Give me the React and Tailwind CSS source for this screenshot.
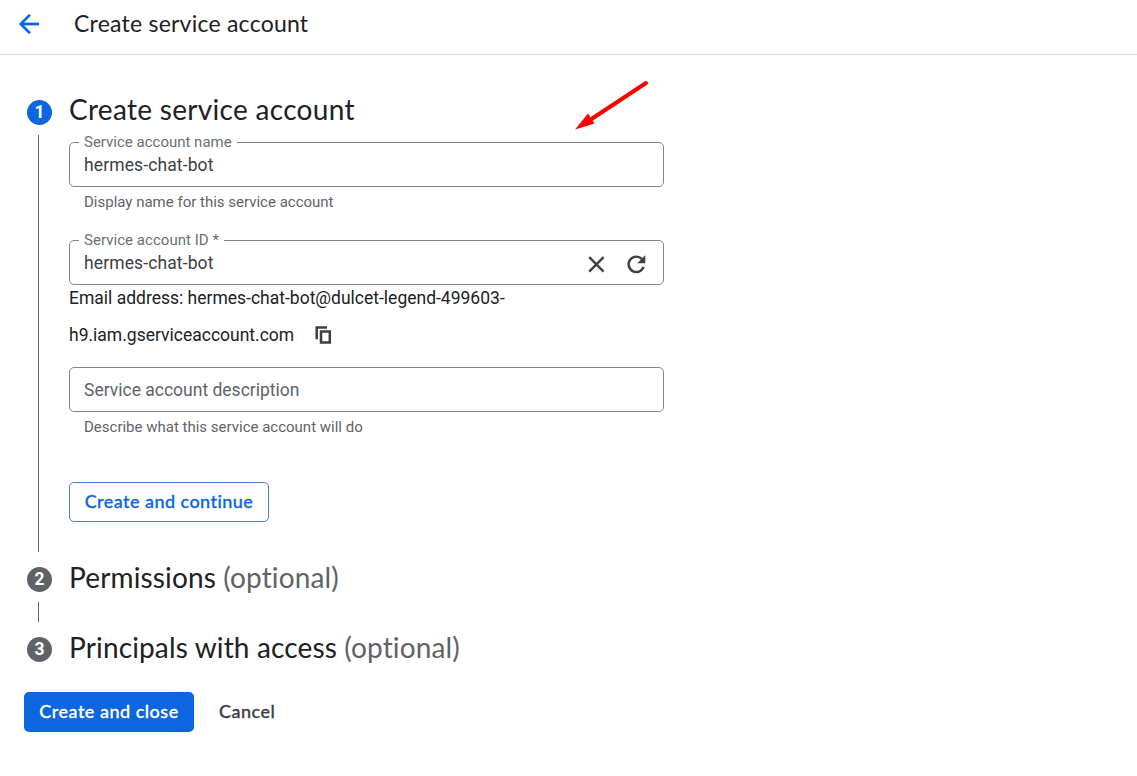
import React, { useState } from 'react';
import clsx from 'clsx';

const STEPS = [
  { id: 1, title: 'Create service account' },
  { id: 2, title: 'Permissions', optional: true },
  { id: 3, title: 'Principals with access', optional: true },
];

function ArrowBackIcon() {
  return (
    <svg width="30" height="30" viewBox="0 0 24 24" fill="#0b66e0" stroke="#0b66e0" strokeWidth="0.2">
      <path d="M20 11H7.83l5.59-5.59L12 4l-8 8 8 8 1.41-1.41L7.83 13H20v-2z" />
    </svg>
  );
}

function ClearIcon() {
  return (
    <svg width="22" height="22" viewBox="0 0 22 22" fill="none" stroke="#3c4043" strokeWidth="2.4">
      <path d="M4.2 4.2l14.4 14.4M18.6 4.2L4.2 18.6" />
    </svg>
  );
}

function RefreshIcon() {
  return (
    <svg width="22" height="22" viewBox="0 0 18 18" fill="none">
      <path d="M15.2 11.4A6.3 6.3 0 1 1 13.9 5" stroke="#3c4043" strokeWidth="2" />
      <path d="M16.6 1.9v6.4H10z" fill="#3c4043" />
    </svg>
  );
}

function CopyIcon() {
  return (
    <svg width="17" height="18" viewBox="0 0 17 18" fill="none" stroke="#3c4043" strokeWidth="2.5">
      <path d="M1.7 13.2V1.4H12" />
      <path d="M6 5.5h8.8v11H6z" />
    </svg>
  );
}

function TextField({ label, value, placeholder, onChange, labelClass, children }) {
  return (
    <div className="relative flex h-[45px] items-center rounded-[5px] border border-[#80868b] pl-[14px] pr-[16px]">
      {label && (
        <label
          className={clsx(
            'absolute left-[9px] -top-[10px] bg-white px-[5px] text-[15px] leading-[18px] text-[#6b6f74] whitespace-nowrap',
            labelClass
          )}
        >
          {label}
        </label>
      )}
      <input
        type="text"
        value={value}
        placeholder={placeholder}
        onChange={(e) => onChange(e.target.value)}
        className="mt-[2px] min-w-0 flex-1 bg-transparent text-[17.5px] tracking-[0.12px] text-[#3c4043] outline-none placeholder:tracking-normal placeholder:text-[#5f6368]"
      />
      {children}
    </div>
  );
}

function Hint({ children }) {
  return <p className="pl-[15px] text-[15px] leading-[30px] text-[#5f6368]">{children}</p>;
}

function Step({ step, active, last, children }) {
  return (
    <li className="flex">
      <div className="flex w-[25px] flex-col items-center">
        <span
          className={clsx(
            'flex size-[25px] shrink-0 items-center justify-center rounded-full text-[17.5px] font-bold leading-none text-white',
            active ? 'bg-[#0b66e0]' : 'bg-[#5f6368]'
          )}
        >
          {step.id}
        </span>
        {!last && <span className="mb-[15px] mr-[2px] mt-[10px] min-h-[20px] w-px flex-1 bg-[#5f6368]" />}
      </div>
      <div className="ml-[17px] w-[595px]">
        <h2
          className={clsx(
            "font-['Lato',sans-serif] text-[28px] text-[#202124] whitespace-nowrap [font-variant-ligatures:none]",
            active ? 'mb-[24px] leading-[18px] tracking-[0.3px]' : 'leading-[20px] tracking-[0.14px]'
          )}
        >
          {step.title}
          {step.optional && <span className="text-[#5f6368]"> (optional)</span>}
        </h2>
        {children}
      </div>
    </li>
  );
}

function App() {
  const [name, setName] = useState('hermes-chat-bot');
  const [accountId, setAccountId] = useState('hermes-chat-bot');
  const [description, setDescription] = useState('');

  return (
    <div className="relative min-h-screen bg-white font-['Roboto',sans-serif]">
      <header className="flex h-[55px] items-center border-b border-[#dadce0] pl-[14px] pb-[6px]">
        <button type="button" aria-label="Back">
          <ArrowBackIcon />
        </button>
        <h1 className="mb-[2px] ml-[30px] font-['Lato',sans-serif] text-[23px] leading-7 tracking-[0.23px] text-[#202124]">
          Create service account
        </h1>
      </header>

      <main>
        <ol className="pl-[27px] pt-[45px]">
          <Step step={STEPS[0]} active>
            <TextField label="Service account name" value={name} onChange={setName} />
            <Hint>Display name for this service account</Hint>

            <div className="mt-[23px]">
              <TextField
                label="Service account ID *"
                labelClass="tracking-[0.04px]"
                value={accountId}
                onChange={setAccountId}
              >
                <button type="button" aria-label="Clear" className="mt-[3px]">
                  <ClearIcon />
                </button>
                <button type="button" aria-label="Refresh" className="ml-[18px] mt-[3px]">
                  <RefreshIcon />
                </button>
              </TextField>
            </div>

            <p className="text-[17.5px] leading-[27px] text-[#202124]">
              Email address: hermes-chat-bot@dulcet-legend-499603-
            </p>
            <div className="flex h-[46px] items-center text-[17.5px] text-[#202124]">
              <span>h9.iam.gserviceaccount.com</span>
              <button type="button" aria-label="Copy" className="ml-[21px]">
                <CopyIcon />
              </button>
            </div>

            <div className="mt-[9px]">
              <TextField
                value={description}
                placeholder="Service account description"
                onChange={setDescription}
              />
            </div>
            <Hint>Describe what this service account will do</Hint>

            <button
              type="button"
              className="mb-[45px] mt-10 flex h-10 w-[200px] items-center justify-center rounded-[5px] border border-[#4a7fd6] pb-[2px] font-['Lato',sans-serif] text-[18px] font-medium tracking-[0.45px] text-[#0b66e0] [-webkit-text-stroke:0.3px] [font-variant-ligatures:none]"
            >
              Create and continue
            </button>
          </Step>
          <Step step={STEPS[1]} />
          <Step step={STEPS[2]} last />
        </ol>

        <div className="mt-[30px] flex items-center pl-6 font-['Lato',sans-serif] text-[18px] font-medium tracking-[0.5px]">
          <button
            type="button"
            className="h-10 w-[170px] rounded-[5px] bg-[#0b66e0] pb-[2px] text-white [-webkit-text-stroke:0.3px]"
          >
            Create and close
          </button>
          <button type="button" className="ml-[25px] pb-[2px] text-[#3c4043] [-webkit-text-stroke:0.3px]">
            Cancel
          </button>
        </div>
      </main>

      {/* Pointer drawn over the form */}
      <svg className="absolute left-[570px] top-[75px]" width="85" height="60" viewBox="0 0 85 60">
        <path d="M76 8L20 45" stroke="#ff0000" strokeWidth="4" strokeLinecap="round" />
        <path d="M5 54.5L18 38.5L24.5 48.5z" fill="#ff0000" />
      </svg>
    </div>
  );
}

export default App;
